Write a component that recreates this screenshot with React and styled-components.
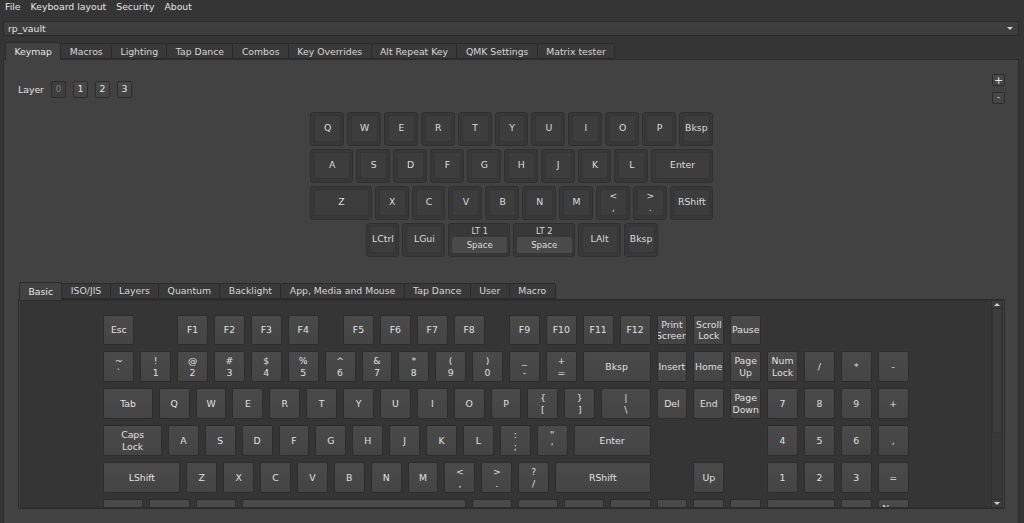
import React from 'react';
import styled, { createGlobalStyle } from 'styled-components';

const U = 36.9;

const GlobalStyle = createGlobalStyle`
  html, body { margin: 0; padding: 0; background: #353535; }
  body {
    font-family: "DejaVu Sans", "Liberation Sans", sans-serif;
    font-size: 9.3px;
    color: #dedede;
  }
  * { box-sizing: border-box; }
`;

const Window = styled.div`
  width: 1024px;
  height: 523px;
  overflow: hidden;
  display: flex;
  flex-direction: column;
  background: #353535;
`;

const MenuBar = styled.nav`
  display: flex;
  height: 13px;
  align-items: center;
`;

const MenuItem = styled.span`
  padding: 0 5px;
  line-height: 13px;
  color: #e6e6e6;
`;

const Body = styled.div`
  flex: 1;
  min-height: 0;
  display: flex;
  flex-direction: column;
  padding: 8px 5px 0 3px;
`;

const Combo = styled.div`
  height: 15px;
  display: flex;
  align-items: center;
  justify-content: space-between;
  padding: 0 5px 0 4px;
  background: linear-gradient(#414141, #3c3c3c);
  border: 1px solid #2a2a2a;
  border-radius: 2px;
  color: #e2e2e2;
`;

const Caret = styled.span`
  width: 0;
  height: 0;
  border-left: 3px solid transparent;
  border-right: 3px solid transparent;
  border-top: 3px solid #cfcfcf;
`;

const TabBar = styled.div`
  display: flex;
  align-items: flex-end;
  padding-left: ${p => p.$indent}px;
  margin-top: ${p => p.$top}px;
  height: 17px;
  position: relative;
  z-index: 1;
`;

const Tab = styled.div`
  height: ${p => (p.$active ? 18 : 16)}px;
  margin-bottom: ${p => (p.$active ? -1 : 0)}px;
  margin-left: -1px;
  padding: 0 8.4px;
  display: flex;
  align-items: center;
  justify-content: center;
  border: 1px solid #2b2b2b;
  border-bottom: ${p => (p.$active ? 'none' : '1px solid #2b2b2b')};
  border-radius: 2px 2px 0 0;
  background: ${p => (p.$active ? '#424242' : '#393939')};
  color: ${p => (p.$active ? '#e8e8e8' : '#d6d6d6')};
  white-space: nowrap;
  &:first-child { margin-left: 0; }
`;

const Pane = styled.div`
  min-height: 0;
  overflow: hidden;
  background: #424242;
  border: 1px solid #2b2b2b;
  display: flex;
  flex-direction: column;
`;

const MainPane = styled(Pane)`
  flex: 1;
  border-bottom: none;
  padding: 14px 13px 0 14px;
`;

const TopRow = styled.div`
  display: flex;
  align-items: center;
  justify-content: space-between;
  height: 30px;
`;

const LayerGroup = styled.div`
  display: flex;
  align-items: center;
  gap: 7px;
`;

const LayerLabel = styled.span`
  color: #e2e2e2;
`;

const SmallButton = styled.div`
  width: ${p => p.$w}px;
  height: ${p => p.$h}px;
  display: flex;
  align-items: center;
  justify-content: center;
  border: 1px solid #2c2c2c;
  border-radius: 2px;
  background: ${p => (p.$off ? '#3e3e3e' : 'linear-gradient(#494949, #434343)')};
  color: ${p => (p.$off ? '#7c7c7c' : '#e6e6e6')};
  font-size: ${p => p.$fs || 9.3}px;
  line-height: 1;
`;

const ZoomGroup = styled.div`
  display: flex;
  flex-direction: column;
  gap: 6px;
`;

const KeymapWrap = styled.div`
  display: flex;
  justify-content: center;
  margin-top: 8px;
  padding-left: 3px;
`;

const KeymapGrid = styled.div`
  display: grid;
  grid-template-columns: repeat(44, ${U / 4}px);
  grid-auto-rows: ${U}px;
`;

const Cap = styled.div`
  grid-column: ${p => Math.round(p.$x * 4) + 1} / span ${p => Math.round(p.$w * 4)};
  grid-row: ${p => p.$y + 1};
  margin: 0 3px 3px 0;
  background: #383838;
  border: 1px solid #303030;
  border-radius: 3px;
  padding: 2px 2px 3px 3px;
  display: flex;
  flex-direction: column;
`;

const CapFace = styled.div`
  flex: 1;
  display: flex;
  align-items: center;
  justify-content: center;
  text-align: center;
  white-space: pre-line;
  line-height: 12px;
  background: #3d3d3d;
  border: 1px solid #353535;
  border-radius: 2px;
  color: #dcdcdc;
`;

const CapTop = styled.div`
  height: 11px;
  text-align: center;
  font-size: 8.3px;
  line-height: 11px;
  color: #d8d8d8;
`;

const CapMask = styled.div`
  flex: 1;
  display: flex;
  align-items: center;
  justify-content: center;
  background: #4a4a4a;
  border-radius: 2px;
  font-size: 8.6px;
  color: #dcdcdc;
`;

const KeyboardTabs = styled.div`
  margin-top: 22px;
  display: flex;
  flex-direction: column;
`;

const Viewport = styled.div`
  height: 208px;
  border: 1px solid #2e2e2e;
  margin: 0 1px;
  display: flex;
  background: #353535;
`;

const ScrollContent = styled.div`
  flex: 1;
  overflow: hidden;
  display: flex;
  justify-content: center;
  padding: 14px 0 0 6px;
`;

const Board = styled.div`
  display: grid;
  grid-template-columns: repeat(88, ${U / 4}px);
  grid-auto-rows: ${U}px;
  align-content: start;
`;

const KeyButton = styled.div`
  grid-column: ${p => Math.round(p.$x * 4) + 1} / span ${p => Math.round(p.$w * 4)};
  grid-row: ${p => p.$y + 1};
  margin: 0 6px 6px 0;
  display: flex;
  align-items: center;
  justify-content: center;
  text-align: center;
  white-space: pre-line;
  line-height: 11.5px;
  background: linear-gradient(#4a4a4a, #444444);
  border: 1px solid #2d2d2d;
  border-radius: 2px;
  color: #e0e0e0;
  overflow: hidden;
`;

const ScrollBar = styled.div`
  width: 11px;
  display: flex;
  flex-direction: column;
  background: #383838;
  border-left: 1px solid #2e2e2e;
`;

const ScrollArrow = styled.div`
  height: 8px;
  display: flex;
  align-items: center;
  justify-content: center;
  background: #3c3c3c;
  border-bottom: ${p => (p.$down ? 'none' : '1px solid #2e2e2e')};
  border-top: ${p => (p.$down ? '1px solid #2e2e2e' : 'none')};
  &::after {
    content: '';
    border-left: 3px solid transparent;
    border-right: 3px solid transparent;
    ${p => (p.$down ? 'border-top: 3px solid #cfcfcf;' : 'border-bottom: 3px solid #cfcfcf;')}
  }
`;

const ScrollTrack = styled.div`
  flex: 1;
  display: flex;
  flex-direction: column;
`;

const ScrollHandle = styled.div`
  height: 124px;
  background: #3d3d3d;
  border: 1px solid #333333;
  border-top: none;
`;

const menus = ['File', 'Keyboard layout', 'Security', 'About'];
const mainTabs = ['Keymap', 'Macros', 'Lighting', 'Tap Dance', 'Combos', 'Key Overrides', 'Alt Repeat Key', 'QMK Settings', 'Matrix tester'];
const keyTabs = ['Basic', 'ISO/JIS', 'Layers', 'Quantum', 'Backlight', 'App, Media and Mouse', 'Tap Dance', 'User', 'Macro'];

// keymap of the connected board: [label, x, y, width, maskLabel]
const keymap = [
  ...['Q', 'W', 'E', 'R', 'T', 'Y', 'U', 'I', 'O', 'P', 'Bksp'].map((k, i) => [k, i, 0, 1]),
  ['A', 0, 1, 1.25],
  ...['S', 'D', 'F', 'G', 'H', 'J', 'K', 'L'].map((k, i) => [k, 1.25 + i, 1, 1]),
  ['Enter', 9.25, 1, 1.75],
  ['Z', 0, 2, 1.75],
  ...['X', 'C', 'V', 'B', 'N', 'M', '<\n,', '>\n.'].map((k, i) => [k, 1.75 + i, 2, 1]),
  ['RShift', 9.75, 2, 1.25],
  ['LCtrl', 1.5, 3, 1],
  ['LGui', 2.5, 3, 1.25],
  ['LT 1', 3.75, 3, 1.75, 'Space'],
  ['LT 2', 5.5, 3, 1.75, 'Space'],
  ['LAlt', 7.25, 3, 1.25],
  ['Bksp', 8.5, 3, 1],
];

const row = (y, list) => list.map(([label, x, w = 1]) => [label, x, y, w]);

// full-size keycode picker: [label, x, y, width]
const basicKeys = [
  ...row(0, [
    ['Esc', 0], ['F1', 2], ['F2', 3], ['F3', 4], ['F4', 5],
    ['F5', 6.5], ['F6', 7.5], ['F7', 8.5], ['F8', 9.5],
    ['F9', 11], ['F10', 12], ['F11', 13], ['F12', 14],
    ['Print\nScreen', 15], ['Scroll\nLock', 16], ['Pause', 17],
  ]),
  ...row(1, [
    ['~\n`', 0], ['!\n1', 1], ['@\n2', 2], ['#\n3', 3], ['$\n4', 4], ['%\n5', 5], ['^\n6', 6],
    ['&\n7', 7], ['*\n8', 8], ['(\n9', 9], [')\n0', 10], ['_\n-', 11], ['+\n=', 12], ['Bksp', 13, 2],
    ['Insert', 15], ['Home', 16], ['Page\nUp', 17], ['Num\nLock', 18], ['/', 19], ['*', 20], ['-', 21],
  ]),
  ...row(2, [
    ['Tab', 0, 1.5], ['Q', 1.5], ['W', 2.5], ['E', 3.5], ['R', 4.5], ['T', 5.5], ['Y', 6.5],
    ['U', 7.5], ['I', 8.5], ['O', 9.5], ['P', 10.5], ['{\n[', 11.5], ['}\n]', 12.5], ['|\n\\', 13.5, 1.5],
    ['Del', 15], ['End', 16], ['Page\nDown', 17], ['7', 18], ['8', 19], ['9', 20], ['+', 21],
  ]),
  ...row(3, [
    ['Caps\nLock', 0, 1.75], ['A', 1.75], ['S', 2.75], ['D', 3.75], ['F', 4.75], ['G', 5.75],
    ['H', 6.75], ['J', 7.75], ['K', 8.75], ['L', 9.75], [':\n;', 10.75], ['"\n\'', 11.75],
    ['Enter', 12.75, 2.25], ['4', 18], ['5', 19], ['6', 20], [',', 21],
  ]),
  ...row(4, [
    ['LShift', 0, 2.25], ['Z', 2.25], ['X', 3.25], ['C', 4.25], ['V', 5.25], ['B', 6.25],
    ['N', 7.25], ['M', 8.25], ['<\n,', 9.25], ['>\n.', 10.25], ['?\n/', 11.25],
    ['RShift', 12.25, 2.75], ['Up', 16], ['1', 18], ['2', 19], ['3', 20], ['=', 21],
  ]),
  ...row(5, [
    ['LCtrl', 0, 1.25], ['LGui', 1.25, 1.25], ['LAlt', 2.5, 1.25], ['', 3.75, 6.25],
    ['RAlt', 10, 1.25], ['RGui', 11.25, 1.25], ['Menu', 12.5, 1.25], ['RCtrl', 13.75, 1.25],
    ['Left', 15], ['Down', 16], ['Right', 17], ['0', 18, 2], ['.', 20], ['Num\nEnter', 21],
  ]),
];

export default function App() {
  return (
    <Window>
      <GlobalStyle />
      <MenuBar>
        {menus.map(m => <MenuItem key={m}>{m}</MenuItem>)}
      </MenuBar>
      <Body>
        <Combo>
          <span>rp_vault</span>
          <Caret />
        </Combo>
        <TabBar $indent={2} $top={6}>
          {mainTabs.map((t, i) => <Tab key={t} $active={i === 0}>{t}</Tab>)}
        </TabBar>
        <MainPane>
          <TopRow>
            <LayerGroup>
              <LayerLabel>Layer</LayerLabel>
              {['0', '1', '2', '3'].map((l, i) => (
                <SmallButton key={l} $w={15} $h={17} $off={i === 0}>{l}</SmallButton>
              ))}
            </LayerGroup>
            <ZoomGroup>
              <SmallButton $w={13} $h={12} $fs={11}>+</SmallButton>
              <SmallButton $w={13} $h={12} $fs={8}>-</SmallButton>
            </ZoomGroup>
          </TopRow>
          <KeymapWrap>
            <KeymapGrid>
              {keymap.map(([label, x, y, w, mask], i) => (
                <Cap key={i} $x={x} $y={y} $w={w}>
                  {mask ? (
                    <>
                      <CapTop>{label}</CapTop>
                      <CapMask>{mask}</CapMask>
                    </>
                  ) : (
                    <CapFace>{label}</CapFace>
                  )}
                </Cap>
              ))}
            </KeymapGrid>
          </KeymapWrap>
          <KeyboardTabs>
            <TabBar $indent={1} $top={0}>
              {keyTabs.map((t, i) => <Tab key={t} $active={i === 0}>{t}</Tab>)}
            </TabBar>
            <Pane>
              <Viewport>
                <ScrollContent>
                  <Board>
                    {basicKeys.map(([label, x, y, w], i) => (
                      <KeyButton key={i} $x={x} $y={y} $w={w}>{label}</KeyButton>
                    ))}
                  </Board>
                </ScrollContent>
                <ScrollBar>
                  <ScrollArrow />
                  <ScrollTrack>
                    <ScrollHandle />
                  </ScrollTrack>
                  <ScrollArrow $down />
                </ScrollBar>
              </Viewport>
            </Pane>
          </KeyboardTabs>
        </MainPane>
      </Body>
    </Window>
  );
}
